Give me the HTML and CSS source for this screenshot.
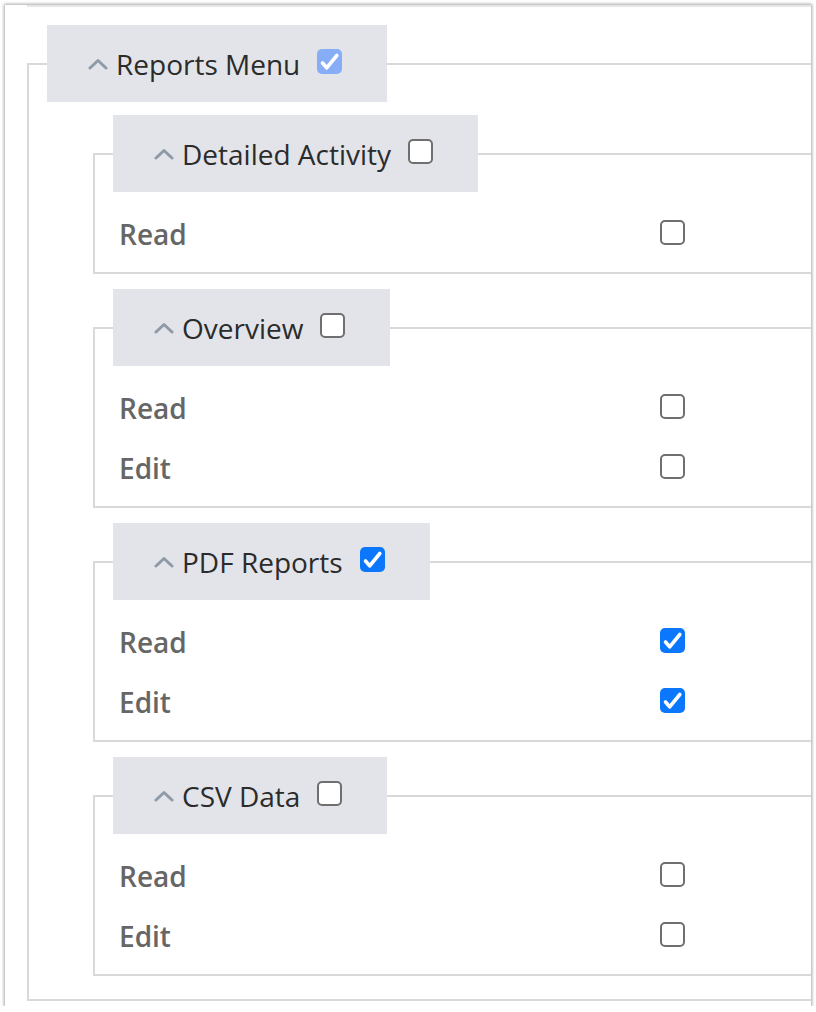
FILE: index.html
```html
<!DOCTYPE html>
<html lang="en">
<head>
  <meta charset="UTF-8">
  <meta name="viewport" content="width=device-width, initial-scale=1.0">
  <title>Permissions - Reports Menu</title>
  <link rel="stylesheet" href="styles.css">
</head>
<body>
  <div class="panel">
    <div class="panel-edge"></div>

    <fieldset class="group group-top">
      <legend>
        <span class="legend-row">
          <svg class="chevron" width="20" height="12" viewBox="0 0 20 12"><path d="M2 10L10 2.5l8 7.5"/></svg>
          <span class="legend-title">Reports Menu</span>
          <span class="box box-faded"><svg width="25" height="25" viewBox="0 0 25 25"><path d="M5.5 14l4.2 4.8L19.8 6.5"/></svg></span>
        </span>
      </legend>

      <fieldset class="group">
        <legend>
          <span class="legend-row">
            <svg class="chevron" width="20" height="12" viewBox="0 0 20 12"><path d="M2 10L10 2.5l8 7.5"/></svg>
            <span class="legend-title">Detailed Activity</span>
            <span class="box"></span>
          </span>
        </legend>
        <div class="perm"><span class="perm-label">Read</span><span class="box"></span></div>
      </fieldset>

      <fieldset class="group">
        <legend>
          <span class="legend-row">
            <svg class="chevron" width="20" height="12" viewBox="0 0 20 12"><path d="M2 10L10 2.5l8 7.5"/></svg>
            <span class="legend-title">Overview</span>
            <span class="box"></span>
          </span>
        </legend>
        <div class="perm"><span class="perm-label">Read</span><span class="box"></span></div>
        <div class="perm"><span class="perm-label">Edit</span><span class="box"></span></div>
      </fieldset>

      <fieldset class="group">
        <legend>
          <span class="legend-row">
            <svg class="chevron" width="20" height="12" viewBox="0 0 20 12"><path d="M2 10L10 2.5l8 7.5"/></svg>
            <span class="legend-title">PDF Reports</span>
            <span class="box box-checked"><svg width="25" height="25" viewBox="0 0 25 25"><path d="M5.5 14l4.2 4.8L19.8 6.5"/></svg></span>
          </span>
        </legend>
        <div class="perm"><span class="perm-label">Read</span><span class="box box-checked"><svg width="25" height="25" viewBox="0 0 25 25"><path d="M5.5 14l4.2 4.8L19.8 6.5"/></svg></span></div>
        <div class="perm"><span class="perm-label">Edit</span><span class="box box-checked"><svg width="25" height="25" viewBox="0 0 25 25"><path d="M5.5 14l4.2 4.8L19.8 6.5"/></svg></span></div>
      </fieldset>

      <fieldset class="group">
        <legend>
          <span class="legend-row">
            <svg class="chevron" width="20" height="12" viewBox="0 0 20 12"><path d="M2 10L10 2.5l8 7.5"/></svg>
            <span class="legend-title">CSV Data</span>
            <span class="box"></span>
          </span>
        </legend>
        <div class="perm"><span class="perm-label">Read</span><span class="box"></span></div>
        <div class="perm"><span class="perm-label">Edit</span><span class="box"></span></div>
      </fieldset>
    </fieldset>
  </div>
</body>
</html>
```

FILE: styles.css
```css
body {
  margin: 0;
  background: #fff;
  font-family: "Open Sans", "Noto Sans", Arial, sans-serif;
}

/* Window-like card, content runs off its right side */
.panel {
  margin: 5px 0 0 5px;
  width: 806px;
  height: 1001px;
  background: #fff;
  overflow: hidden;
  box-shadow: 0 0 3px 1px rgba(0, 0, 0, 0.35);
}

.panel-edge {
  margin-left: 22px;
  border-top: 2px solid #e6e6e6;
}

.group {
  margin: 0;
  padding: 12px 0 8px 18px;
  border: 2px solid #d9d9d9;
  min-width: 0;
}

.group-top {
  width: 900px;
  margin: 18px 0 0 22px;
  padding: 13px 0 23px 18px;
}

.group .group {
  margin: 0 0 15px 46px;
}

.group .group:last-child {
  margin-bottom: 0;
}

legend {
  padding: 0;
  background: #e2e4e9;
}

.legend-row {
  display: flex;
  align-items: center;
  height: 77px;
  padding: 0 45px 0 41px;
  font-size: 28px;
  color: #2b2b2b;
}

.chevron {
  margin-right: 8px;
}

.chevron path {
  fill: none;
  stroke: #8e9ba6;
  stroke-width: 3;
  stroke-linecap: round;
  stroke-linejoin: round;
}

.legend-title {
  margin-right: 17px;
}

/* Permission rows */
.perm {
  display: flex;
  align-items: center;
  height: 60px;
  padding-left: 6px;
}

.perm-label {
  width: 541px;
  font-size: 28px;
  font-weight: 600;
  color: #666;
}

/* Checkboxes */
.box {
  display: inline-flex;
  align-items: center;
  justify-content: center;
  width: 25px;
  height: 25px;
  box-sizing: border-box;
  border: 2px solid #6f6f6f;
  border-radius: 5px;
  background: #fff;
  margin-top: -4px;
}

.box svg path {
  fill: none;
  stroke: #fff;
  stroke-width: 3.6;
  stroke-linecap: round;
  stroke-linejoin: round;
}

.box-checked,
.box-faded {
  border: none;
}

.box-checked {
  background: #0a77fd;
}

.box-faded {
  background: #86adf6;
}
```
